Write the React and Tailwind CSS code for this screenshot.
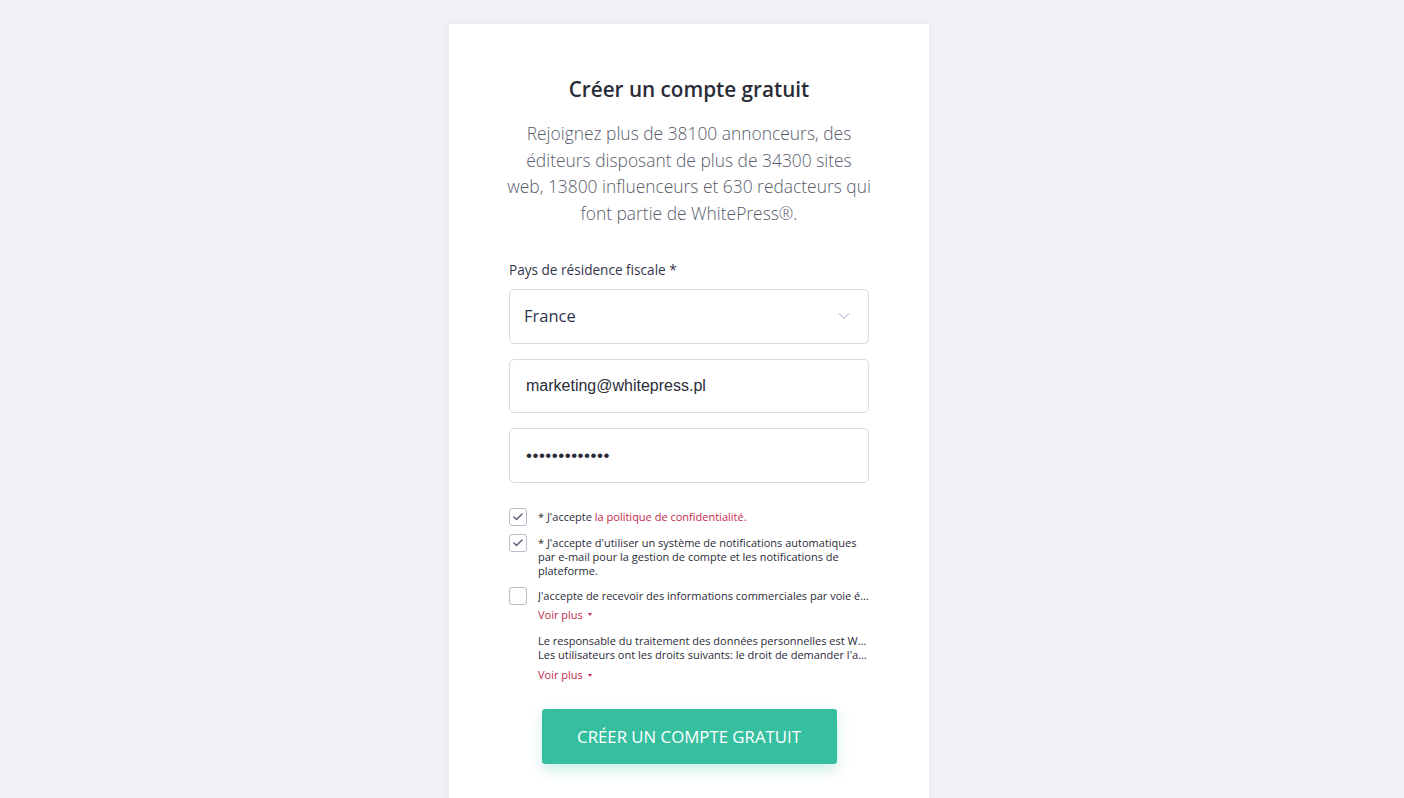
import { ChevronDown, Check } from 'lucide-react';

const Checkbox = ({ checked }) => (
  <span className="mt-[1px] flex h-[18px] w-[18px] shrink-0 items-center justify-center rounded-[3px] border border-[#b9bccb] bg-white">
    {checked && <Check className="h-[12px] w-[12px] text-[#5f6685]" strokeWidth={3.2} />}
  </span>
);

const VoirPlus = () => (
  <button className="mt-[5px] flex items-center gap-[5px] text-[11px] leading-[14px] text-[#c22b4c]">
    Voir plus
    <span className="inline-block h-0 w-0 border-x-[2px] border-t-[3px] border-x-transparent border-t-[#c22b4c]" />
  </button>
);

const App = () => {
  return (
    <div className="flex min-h-[798px] justify-center bg-[#f1f2f7] pr-[26px] pt-[24px] font-['Open_Sans',sans-serif]">
      <div className="h-[774px] w-[480px] bg-white px-[60px] pt-[50px] shadow-[0_0_12px_rgba(40,50,90,0.05)]">
        <h1 className="text-center text-[20.7px] font-semibold leading-[30px] text-[#2a2c38]">Créer un compte gratuit</h1>
        <p className="-mx-[6px] mt-[16px] text-center text-[17.4px] font-light leading-[26.7px] text-[#585c6c]">
          Rejoignez plus de 38100 annonceurs, des<br />
          éditeurs disposant de plus de 34300 sites<br />
          web, 13800 influenceurs et 630 redacteurs qui<br />
          font partie de WhitePress®.
        </p>

        <label className="mt-[33px] block text-[13.6px] leading-[20px] text-[#33364a]">Pays de résidence fiscale *</label>
        <div className="mt-[9px] flex h-[55px] items-center justify-between rounded-[5px] border border-[#d8dae5] px-[14px]">
          <span className="text-[16.5px] text-[#2e3550]">France</span>
          <ChevronDown className="h-[20px] w-[20px] text-[#9aa0c8]" strokeWidth={1.1} />
        </div>
        <div className="mt-[15px] flex h-[54px] items-center rounded-[5px] border border-[#d8dae5] px-[16px]">
          <span className="font-['Liberation_Sans',Arial,sans-serif] text-[16px] text-[#2a2c38]">marketing@whitepress.pl</span>
        </div>
        <div className="mt-[15px] flex h-[55px] items-center rounded-[5px] border border-[#d8dae5] px-[16px]">
          <span className="font-['Liberation_Sans',Arial,sans-serif] text-[17px] tracking-[0.5px] text-[#2a2c38]">•••••••••••••</span>
        </div>

        <div className="mt-[24px] flex flex-col text-[11px] leading-[14px] text-[#2a2c38]">
          <div className="flex gap-[11px]">
            <Checkbox checked />
            <p className="pt-[3px]">* J'accepte <span className="text-[#c22b4c]">la politique de confidentialité.</span></p>
          </div>
          <div className="mt-[7px] flex gap-[11px]">
            <Checkbox checked />
            <p className="pt-[3px] pr-[8px]">* J'accepte d'utiliser un système de notifications automatiques par e-mail pour la gestion de compte et les notifications de plateforme.</p>
          </div>
          <div className="mt-[8px] flex gap-[11px]">
            <Checkbox />
            <div className="min-w-0 pt-[3px]">
              <p className="truncate">J'accepte de recevoir des informations commerciales par voie électronique de la part de WhitePress.</p>
              <VoirPlus />
            </div>
          </div>
          <div className="mt-[12px] pl-[29px] leading-[14.6px]">
            <p className="truncate">Le responsable du traitement des données personnelles est WhitePress sp. z o.o.</p>
            <p className="truncate">Les utilisateurs ont les droits suivants: le droit de demander l'accès à leurs données.</p>
            <VoirPlus />
          </div>
        </div>

        <div className="mt-[27px] flex justify-center">
          <button className="h-[55px] w-[295px] rounded-[3px] bg-[#36bf9f] text-[16.8px] uppercase text-white shadow-[0_6px_14px_rgba(54,191,159,0.25)]">
            Créer un compte gratuit
          </button>
        </div>
      </div>
    </div>
  );
};

export default App;
